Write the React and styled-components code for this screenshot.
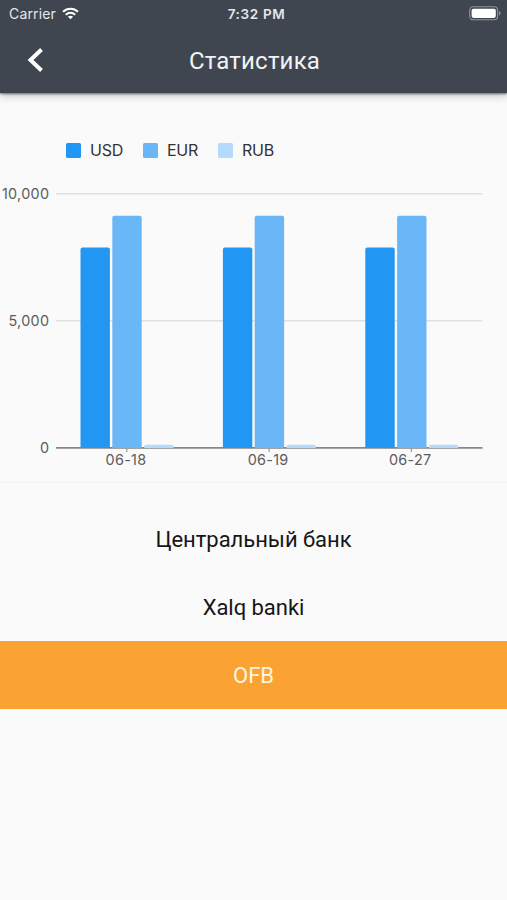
import styled, { createGlobalStyle } from 'styled-components';

const GlobalStyle = createGlobalStyle`
  * {
    box-sizing: border-box;
  }

  body {
    margin: 0;
    background: #fafafa;
    font-family: Roboto, sans-serif;
  }
`;

const Screen = styled.div`
  width: 507px;
  height: 900px;
  display: flex;
  flex-direction: column;
  overflow: hidden;
  background: #fafafa;
`;

const Header = styled.header`
  height: 93px;
  flex-shrink: 0;
  background: #3f4650;
  box-shadow: 0 1px 2px rgba(0, 0, 0, 0.5), 0 3px 8px rgba(0, 0, 0, 0.22);
`;

const StatusBar = styled.div`
  height: 27px;
  display: grid;
  grid-template-columns: 1fr auto 1fr;
  align-items: center;
  padding: 0 6px 0 9px;
  color: #e4e8ed;
  font-family: Inter, sans-serif;
  font-size: 14px;
`;

const Carrier = styled.div`
  display: flex;
  align-items: center;
  gap: 6px;
  letter-spacing: 0.15px;
`;

const Clock = styled.div`
  padding-left: 3px;
  font-size: 13.5px;
  font-weight: 600;
  letter-spacing: 0.65px;
`;

const Battery = styled.div`
  justify-self: end;
  display: flex;
`;

const AppBar = styled.div`
  height: 66px;
  display: grid;
  grid-template-columns: 72px 1fr 72px;
  align-items: center;
`;

const BackButton = styled.button`
  display: flex;
  padding: 0 0 0 27px;
  border: 0;
  background: none;
`;

const Title = styled.h1`
  margin: 0;
  padding: 1px 0 0 2px;
  color: #f1f3f6;
  font-size: 24px;
  font-weight: 400;
  line-height: 28px;
  letter-spacing: 0.2px;
  text-align: center;
`;

const ChartCard = styled.section`
  height: 390px;
  flex-shrink: 0;
  padding-top: 47px;
  border-bottom: 1px solid #f1f1f1;
`;

const Legend = styled.div`
  display: flex;
  align-items: center;
  height: 20px;
  padding-left: 66px;
  gap: 20px;
`;

const LegendItem = styled.div`
  display: flex;
  align-items: center;
  gap: 9px;
  color: #333;
  font-family: Inter, sans-serif;
  font-size: 16px;
  letter-spacing: -0.25px;
`;

const Swatch = styled.span`
  width: 15px;
  height: 15px;
  border-radius: 1.5px;
  background: ${({ $color }) => $color};
`;

const Plot = styled.svg`
  display: block;
  margin-top: 20px;
`;

const AxisLabel = styled.text`
  fill: #5c5c5c;
  font-family: Inter, sans-serif;
  font-size: 14.4px;
  letter-spacing: 0.3px;
`;

const BankList = styled.div`
  padding-top: 22px;
`;

const Bank = styled.div`
  height: 68px;
  display: flex;
  align-items: center;
  justify-content: center;
  background: ${({ $active }) => ($active ? '#faa332' : 'transparent')};
  color: ${({ $active }) => ($active ? '#fff4e4' : '#161616')};
  font-size: 22px;
  letter-spacing: -0.03px;
`;

const SERIES = [
  { name: 'USD', color: '#2196f3' },
  { name: 'EUR', color: '#6ab7f7' },
  { name: 'RUB', color: '#b5dafb' },
];

const DAYS = [
  { date: '06-18', values: [7880, 9130, 125] },
  { date: '06-19', values: [7880, 9130, 125] },
  { date: '06-27', values: [7880, 9130, 125] },
];

const BANKS = ['Центральный банк', 'Xalq banki', 'OFB'];

const BASE = 267.9;
const UNIT = 254.2 / 10000;

// bar with only its top corners rounded
const barPath = (x, value) => {
  const w = 29.4;
  const h = value * UNIT;
  const r = Math.min(2, h);
  return `M${x} ${BASE}v${r - h}q0 ${-r} ${r} ${-r}h${w - 2 * r}q${r} 0 ${r} ${r}v${h - r}z`;
};

const Chart = () => (
  <Plot width="507" height="302" viewBox="0 0 507 302">
    {[10000, 5000].map((tick) => (
      <g key={tick}>
        <path d={`M56 ${BASE - tick * UNIT}H482`} stroke="#e0e0e0" strokeWidth="1.4" />
        <AxisLabel x="49.3" y={BASE - tick * UNIT + 5.2} textAnchor="end">
          {tick.toLocaleString('en-US')}
        </AxisLabel>
      </g>
    ))}
    <path d={`M56 ${BASE}H482.5`} stroke="#868686" strokeWidth="1.8" />
    <AxisLabel x="49.3" y={BASE + 5.2} textAnchor="end">0</AxisLabel>
    {DAYS.map((day, i) => (
      <g key={day.date}>
        <path d={`M${126.8 + i * 142.3} ${BASE}v4`} stroke="#999" strokeWidth="1.2" />
        {day.values.map((value, n) => (
          <path
            key={SERIES[n].name}
            d={barPath(80.5 + i * 142.4 + n * 31.8, value)}
            fill={SERIES[n].color}
          />
        ))}
        <AxisLabel x={126 + i * 142.1} y="285.3" textAnchor="middle">{day.date}</AxisLabel>
      </g>
    ))}
  </Plot>
);

const App = () => {
  return (
    <Screen>
      <GlobalStyle />
      <Header>
        <StatusBar>
          <Carrier>
            Carrier
            <svg width="17" height="13" viewBox="0 0 17 13" fill="none" stroke="#fff" strokeWidth="2.1">
              <path d="M1 4.8C5.3.7 11.7.7 16 4.8" />
              <path d="M3.8 7.7c2.8-2.5 6.6-2.5 9.4 0" />
              <path d="M5.9 9.7c1.5-1.3 3.7-1.3 5.2 0L8.5 12.3z" fill="#fff" stroke="none" />
            </svg>
          </Carrier>
          <Clock>7:32 PM</Clock>
          <Battery>
            <svg width="32" height="15" viewBox="0 0 32 15">
              <rect x="0.7" y="0.8" width="27.9" height="13" rx="3.5" fill="none" stroke="#8e949c" strokeWidth="1.1" />
              <rect x="2.6" y="2.7" width="24.2" height="9.2" rx="1.8" fill="#fff" />
              <path d="M30 5.2c2.1.6 2.1 3.6 0 4.2z" fill="#8e949c" />
            </svg>
          </Battery>
        </StatusBar>
        <AppBar>
          <BackButton aria-label="Назад">
            <svg width="17" height="26" viewBox="0 0 17 26">
              <path d="M14.5 2.5 3.5 13l11 10.5" fill="none" stroke="#fff" strokeWidth="4" />
            </svg>
          </BackButton>
          <Title>Статистика</Title>
        </AppBar>
      </Header>

      <ChartCard>
        <Legend>
          {SERIES.map((item) => (
            <LegendItem key={item.name}>
              <Swatch $color={item.color} />
              {item.name}
            </LegendItem>
          ))}
        </Legend>
        <Chart />
      </ChartCard>

      <BankList>
        {BANKS.map((bank) => (
          <Bank key={bank} $active={bank === 'OFB'}>{bank}</Bank>
        ))}
      </BankList>
    </Screen>
  );
};

export default App;
